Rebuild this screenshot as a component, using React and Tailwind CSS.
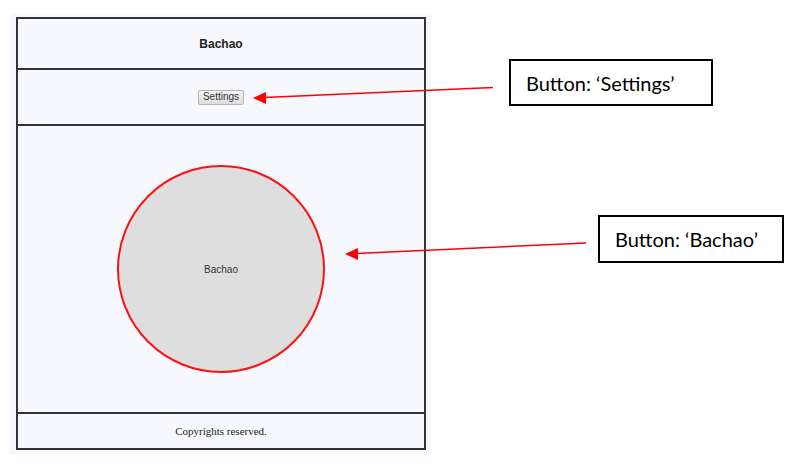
export default function App() {
  return (
    <div className="relative w-[804px] h-[470px] bg-white overflow-hidden">
      {/* MOCKUP PANEL */}
      <div className="pt-[13px] pl-[10px]">
        <div className="w-[421px] h-[442px] bg-[#f7f8fd] pt-[4px] pl-[6px]">
          <div className="w-[410px] h-[433px] border-2 border-[#333] flex flex-col">
            <header className="h-[51px] border-b-2 border-[#333] flex items-center justify-center">
              <span className="font-['Liberation_Sans',Arial,sans-serif] font-bold text-[12px] text-[#222]">
                Bachao
              </span>
            </header>

            <div className="h-[56px] border-b-2 border-[#333] flex items-center justify-center">
              <button className="h-[15px] px-[4px] border border-[#b5b5b5] rounded-[2px] bg-gradient-to-b from-[#f4f4f4] to-[#dcdcdc] font-['Liberation_Sans',Arial,sans-serif] text-[10px] leading-none text-[#333]">
                Settings
              </button>
            </div>

            <main className="h-[288px] border-b-2 border-[#333] flex items-center justify-center">
              <button className="w-[208px] h-[208px] rounded-full border-2 border-[#ff1010] bg-[#dedede] font-['Liberation_Sans',Arial,sans-serif] text-[10px] text-[#333]">
                Bachao
              </button>
            </main>

            <footer className="flex-1 flex items-center justify-center">
              <span className="font-['Liberation_Serif','Times_New_Roman',serif] text-[11px] text-[#222]">
                Copyrights reserved.
              </span>
            </footer>
          </div>
        </div>
      </div>

      {/* ANNOTATIONS */}
      <svg className="absolute inset-0" width="804" height="470" viewBox="0 0 804 470">
        <line x1="493" y1="87.5" x2="264" y2="97.5" stroke="#ff0000" strokeWidth="1.4" />
        <polygon points="253,98 266,92 266,104" fill="#ff0000" />
        <line x1="586" y1="243" x2="356" y2="253.5" stroke="#ff0000" strokeWidth="1.4" />
        <polygon points="345,254 358,248 358,260" fill="#ff0000" />
      </svg>

      <div className="absolute left-[509px] top-[59px] w-[204px] h-[47px] border-2 border-black bg-white flex items-center pl-[15px]">
        <span className="font-['Lato',sans-serif] text-[20px] text-black">Button: ‘Settings’</span>
      </div>
      <div className="absolute left-[598px] top-[215px] w-[186px] h-[48px] border-2 border-black bg-white flex items-center pl-[15px]">
        <span className="font-['Lato',sans-serif] text-[20px] text-black">Button: ‘Bachao’</span>
      </div>
    </div>
  );
}
